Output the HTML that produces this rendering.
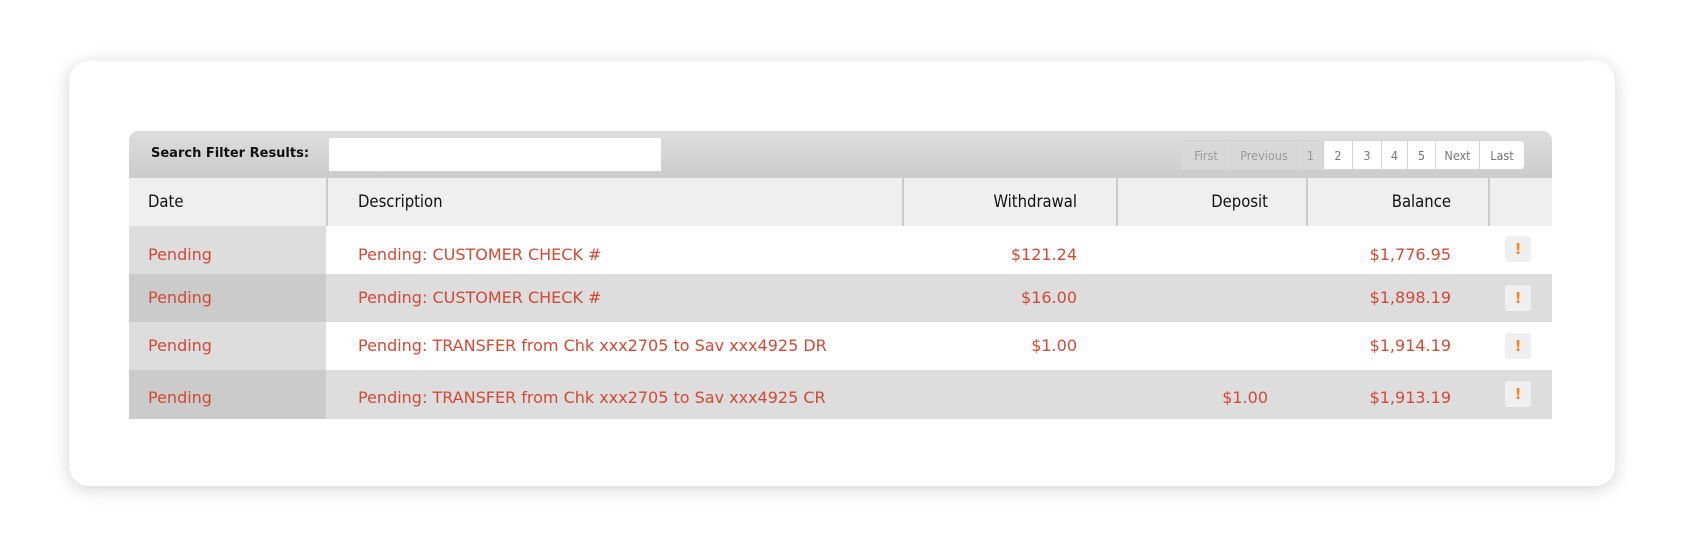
<!DOCTYPE html>
<html><head><meta charset="utf-8"><style>
*{box-sizing:border-box;margin:0;padding:0}
body{width:1683px;height:552px;background:#fff;position:relative;overflow:hidden;font-family:"DejaVu Sans","Liberation Sans",sans-serif}
.card{position:absolute;left:69px;top:61px;width:1546px;height:425px;background:#fff;border-radius:20px;box-shadow:0 3px 18px rgba(0,0,0,.18)}
.tb{position:absolute;left:129px;top:131px;width:1423px;height:47px;border-radius:9px 9px 0 0;background:linear-gradient(#dedede,#cbcbcb)}
.lbl{position:absolute;left:151px;top:146px;font:bold 13px "DejaVu Sans","Liberation Sans",sans-serif;color:#111}
.inp{position:absolute;left:329px;top:138px;width:332px;height:33px;background:#fff}
.pg{position:absolute;top:140px;height:30px;display:flex;left:1181px}
.pg span{height:30px;line-height:30px;padding:0;font-size:12.5px;color:#777;background:#fff;border:1px solid #d4d4d4;margin-right:-1px;text-align:center;font-family:"DejaVu Sans Condensed",sans-serif}
.pg span.d{background:#d8d8d8;color:#999}
.row{position:absolute;left:129px;width:1423px;font-size:16px}
.row div{position:absolute;top:0;height:100%}
.hd{top:178px;height:48px;background:#efefef;color:#111;font-family:"DejaVu Sans Condensed",sans-serif;font-size:16.5px}
.hd .s{border-left:2px solid #ccc}
.r{height:48px;color:#d04a35}
.ic{position:absolute;width:26px;height:26px;background:#efefef;border-radius:3px;color:#f5852a;font-weight:bold;text-align:center;line-height:26px;font-size:15px;font-family:"DejaVu Sans",sans-serif}
</style></head><body>
<div class="card"></div>
<div class="tb"></div>
<div class="lbl">Search Filter Results:</div>
<div class="inp"></div>
<div class="pg"><span class="d" style="width:50px">First</span><span class="d" style="width:68px">Previous</span><span class="d" style="width:27px">1</span><span style="width:30px">2</span><span style="width:30px">3</span><span style="width:27px">4</span><span style="width:29px">5</span><span style="width:45px">Next</span><span style="width:46px;border-radius:0 4px 4px 0">Last</span></div>

<div class="row hd">
<div style="left:19px;line-height:48px">Date</div>
<div class="s" style="left:197px;width:2px"></div>
<div style="left:229px;line-height:48px">Description</div>
<div class="s" style="left:773px;width:2px"></div>
<div style="right:475px;line-height:48px">Withdrawal</div>
<div class="s" style="left:987px;width:2px"></div>
<div style="right:284px;line-height:48px">Deposit</div>
<div class="s" style="left:1177px;width:2px"></div>
<div style="right:101px;line-height:48px">Balance</div>
<div class="s" style="left:1359px;width:2px"></div>
</div>

<div class="row r" style="top:226px;background:#fff"><div style="left:0;width:197px;background:#ddd"></div>
<div style="left:19px;top:19px">Pending</div><div style="left:229px;top:19px">Pending: CUSTOMER CHECK #</div><div style="right:475px;top:19px">$121.24</div><div style="right:101px;top:19px">$1,776.95</div></div>
<div class="row r" style="top:274px;background:#ddd"><div style="left:0;width:197px;background:#cbcbcb"></div>
<div style="left:19px;top:14px">Pending</div><div style="left:229px;top:14px">Pending: CUSTOMER CHECK #</div><div style="right:475px;top:14px">$16.00</div><div style="right:101px;top:14px">$1,898.19</div></div>
<div class="row r" style="top:322px;background:#fff"><div style="left:0;width:197px;background:#ddd"></div>
<div style="left:19px;top:14px">Pending</div><div style="left:229px;top:14px">Pending: TRANSFER from Chk xxx2705 to Sav xxx4925 DR</div><div style="right:475px;top:14px">$1.00</div><div style="right:101px;top:14px">$1,914.19</div></div>
<div class="row r" style="top:370px;height:49px;background:#ddd"><div style="left:0;width:197px;background:#cbcbcb"></div>
<div style="left:19px;top:18px">Pending</div><div style="left:229px;top:18px">Pending: TRANSFER from Chk xxx2705 to Sav xxx4925 CR</div><div style="right:284px;top:18px">$1.00</div><div style="right:101px;top:18px">$1,913.19</div></div>

<div class="ic" style="left:1505px;top:236px">!</div>
<div class="ic" style="left:1505px;top:285px">!</div>
<div class="ic" style="left:1505px;top:333px">!</div>
<div class="ic" style="left:1505px;top:381px">!</div>
</body></html>
